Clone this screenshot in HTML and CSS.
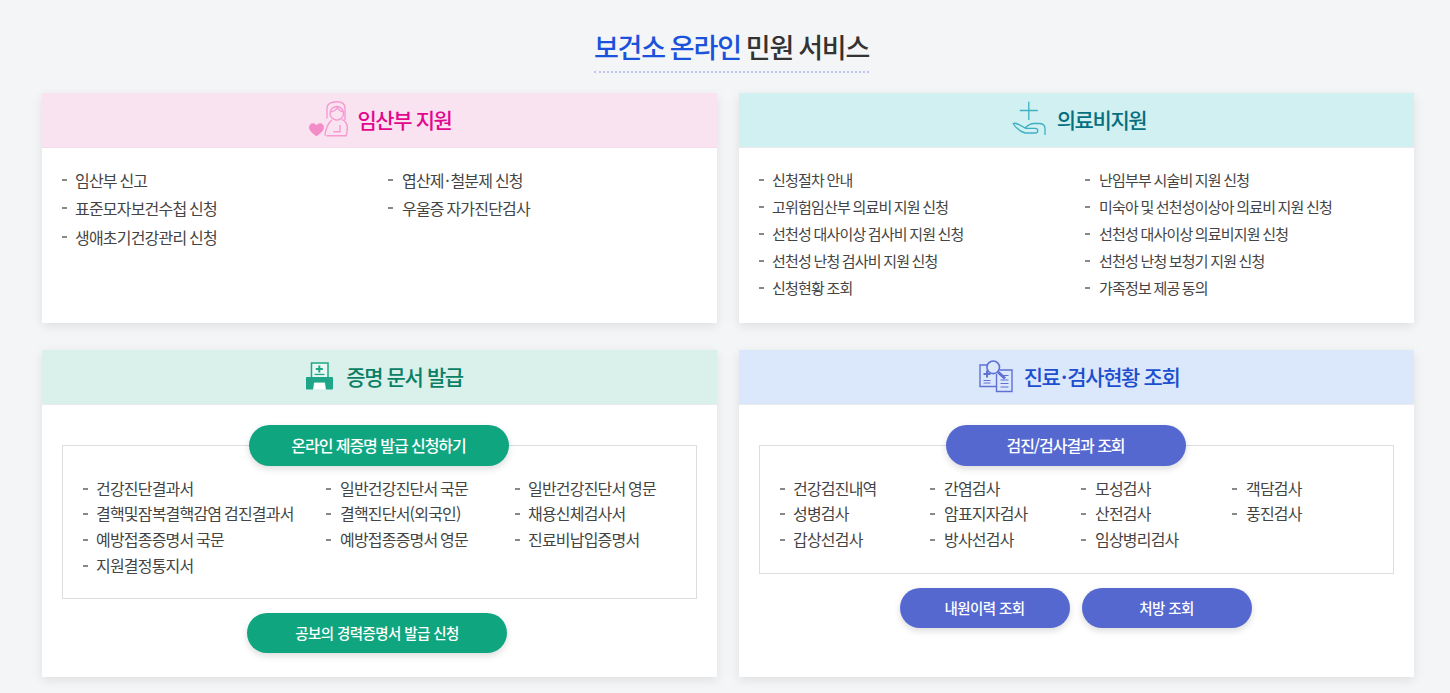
FILE: index.html
```html
<!DOCTYPE html>
<html lang="ko">
<head>
<meta charset="utf-8">
<title>보건소 온라인 민원 서비스</title>
<link rel="stylesheet" href="styles.css">
</head>
<body>
<main class="page">
  <div class="title-wrap">
    <h1 class="title"><span class="title-accent">보건소 온라인</span> 민원 서비스</h1>
  </div>
  <div class="cards">
    <section class="card card-top">
      <header class="card-head head-pink">
        <svg class="ico" width="41" height="40" viewBox="0 0 41 40" fill="none" stroke="#f59ad0" stroke-width="1.400">
          <path d="M2 27.500c0-2.500 1.800-4.200 3.800-4.200 1.500 0 3 .8 3.700 2.200.7-1.400 2.200-2.200 3.700-2.200 2 0 3.800 1.700 3.800 4.200 0 3.500-4.500 6.500-7.500 8.800-3-2.300-7.500-5.300-7.500-8.800z" fill="#f48cc8" stroke="none"/>
          <path d="M20 18.500V8c0-4 4-6.300 9.500-6.300S38 4 38 8v12"/>
          <circle cx="29.800" cy="13.300" r="6.800"/>
          <path d="M23.300 12c3-.3 5.500-1.800 7-4.500 1 2 3.200 3.700 6 4.500"/>
          <path d="M24.700 20C20.500 24 18.500 29.500 18 35.700M34.700 19.300c3.800 1.500 5.600 4.500 5.600 8.200 0 3-.3 5.500-1.300 8.200H19.500M26.300 31.700H33V25"/>
        </svg>
        <h2 class="card-title t-pink">임산부 지원</h2>
      </header>
      <ul class="list list-a">
        <li>임산부 신고</li>
        <li>엽산제<span class="dot">·</span>철분제 신청</li>
        <li>표준모자보건수첩 신청</li>
        <li>우울증 자가진단검사</li>
        <li>생애초기건강관리 신청</li>
      </ul>
    </section>
    <section class="card card-top">
      <header class="card-head head-teal">
        <svg class="ico" width="41" height="40" viewBox="0 0 41 40" fill="none" stroke="#3fb0c4" stroke-width="1.300">
          <path d="M21.800 1.700V20M12.800 10.500h18"/>
          <path d="M6 23.500c3-1 6.300 1 12 4.500 3-3 6-4.500 9-4.500h5c4 0 6 2 6 5V35M6 23.500c3 4.500 6.500 8 12 9.500H28c1.800 0 2.800-1 2.800-2.200 0-1.800-1-2.400-2.800-2.400h-9.800"/>
        </svg>
        <h2 class="card-title t-teal">의료비지원</h2>
      </header>
      <ul class="list list-b">
        <li>신청절차 안내</li>
        <li>난임부부 시술비 지원 신청</li>
        <li>고위험임산부 의료비 지원 신청</li>
        <li>미숙아 및 선천성이상아 의료비 지원 신청</li>
        <li>선천성 대사이상 검사비 지원 신청</li>
        <li>선천성 대사이상 의료비지원 신청</li>
        <li>선천성 난청 검사비 지원 신청</li>
        <li>선천성 난청 보청기 지원 신청</li>
        <li>신청현황 조회</li>
        <li>가족정보 제공 동의</li>
      </ul>
    </section>
    <section class="card card-bottom">
      <header class="card-head head-green">
        <svg class="ico" width="41" height="40" viewBox="0 0 41 40">
          <path d="M15.500 6h16.500v15H15.500z" fill="#eaf8f4" stroke="#1fa688" stroke-width="1.500"/>
          <path d="M22.300 8.500h2v2.500h2.500v2h-2.500v2.500h-2V13h-2.500v-2h2.500z" fill="#1fa688"/>
          <path d="M18.500 16.800h10v1.300h-10z" fill="#1fa688"/>
          <path d="M11 20h25c.6 0 1 .4 1 1v10.500c0 .6-.4 1-1 1h-6l-1-7H18l-1 7h-6c-.6 0-1-.4-1-1V21c0-.6.4-1 1-1z" fill="#1fa688"/>
          <path d="M18.700 26.200h9.600l1 6H17.700z" fill="#fff"/>
        </svg>
        <h2 class="card-title t-green">증명 문서 발급</h2>
      </header>
      <div class="card-body">
        <a class="pill pill-green pill-wide pill-over">온라인 제증명 발급 신청하기</a>
        <ul class="list list-c">
          <li>건강진단결과서</li>
          <li>일반건강진단서 국문</li>
          <li>일반건강진단서 영문</li>
          <li>결핵및잠복결핵감염 검진결과서</li>
          <li>결핵진단서(외국인)</li>
          <li>채용신체검사서</li>
          <li>예방접종증명서 국문</li>
          <li>예방접종증명서 영문</li>
          <li>진료비납입증명서</li>
          <li>지원결정통지서</li>
        </ul>
        <div class="pill-row pill-row-green">
          <a class="pill pill-green pill-wide">공보의 경력증명서 발급 신청</a>
        </div>
      </div>
    </section>
    <section class="card card-bottom">
      <header class="card-head head-blue">
        <svg class="ico" width="41" height="40" viewBox="0 0 41 40" fill="none" stroke="#5f71d4" stroke-width="1.400">
          <path d="M14 8H6v21.500H22.500V17"/>
          <path d="M25.500 13H38v21.500H22.500v-5"/>
          <circle cx="19.200" cy="10.300" r="6.300" stroke-width="1.600"/>
          <path d="M24 15l7 6.500" stroke-width="3"/>
          <path d="M12 13.500h2V16h2.500v2H14v2.500h-2V18H9.500v-2H12z" fill="#5f71d4" stroke="none"/>
          <path d="M9.500 23.500h7M9.500 26h7M26.500 18.500h8M26.500 23h8M26.500 26.500h8M26.500 30h8" stroke-width="1.100"/>
        </svg>
        <h2 class="card-title t-blue">진료<span class="dot">·</span>검사현황 조회</h2>
      </header>
      <div class="card-body">
        <a class="pill pill-blue pill-mid pill-over">검진/검사결과 조회</a>
        <ul class="list list-d">
          <li>건강검진내역</li>
          <li>간염검사</li>
          <li>모성검사</li>
          <li>객담검사</li>
          <li>성병검사</li>
          <li>암표지자검사</li>
          <li>산전검사</li>
          <li>풍진검사</li>
          <li>갑상선검사</li>
          <li>방사선검사</li>
          <li>임상병리검사</li>
        </ul>
        <div class="pill-row pill-row-blue">
          <a class="pill pill-blue pill-small">내원이력 조회</a>
          <a class="pill pill-blue pill-small">처방 조회</a>
        </div>
      </div>
    </section>
  </div>
</main>
</body>
</html>
```
FILE: styles.css
```css
* { box-sizing: border-box; }
html, body { margin: 0; padding: 0; }
body {
  background: #f3f5f7;
  font-family: "Noto Sans CJK KR", "Noto Sans", sans-serif;
  color: #444;
  overflow: hidden;
}
.page { height: 693px; padding: 27px 36px 0 42px; }
.title-wrap { display: flex; justify-content: center; height: 66px; padding-left: 7px; }
.title {
  margin: 0;
  height: 46px;
  font-size: 27px;
  font-weight: 500;
  line-height: 40px;
  letter-spacing: -1.2px;
  word-spacing: -1.3px;
  color: #333;
  border-bottom: 2px dotted #bcc4ef;
}
.title-accent { color: #1b52dc; }
.cards {
  display: grid;
  grid-template-columns: 675px 675px;
  grid-template-rows: 230px 327px;
  column-gap: 22px;
  row-gap: 27px;
}
.card { background: #fff; box-shadow: 0 3px 10px rgba(0, 0, 0, .09); }
.card-head {
  height: 55px;
  display: flex;
  align-items: center;
  justify-content: center;
  gap: 9px;
  border-bottom: 1px solid #e9e9ee;
}
.head-pink { background: #f9e3f1; border-bottom-color: #f5dcec; }
.head-teal { background: #d0f0f1; }
.head-green { background: #d9f1ea; }
.head-blue { background: #dbe7fa; }
.ico { display: block; flex: none; }
.card-title {
  margin: 0;
  padding-bottom: 2px;
  font-size: 21px;
  font-weight: 500;
  line-height: 30px;
  letter-spacing: -1.4px;
}
.t-pink { color: #e3078e; }
.t-teal { color: #076f80; }
.t-green { color: #0b7f66; }
.t-blue { color: #1b4ed0; }
.dot { margin: 0 1.500px; }
.list {
  list-style: none;
  margin: 0;
  padding: 0;
  display: grid;
  font-size: 16px;
  letter-spacing: -0.8px;
  word-spacing: -1px;
  color: #444;
}
.list li { position: relative; padding-left: 13px; white-space: nowrap; }
.list li::before {
  content: "";
  position: absolute;
  left: 0;
  top: calc(50% - 1px);
  width: 5px;
  height: 2px;
  background: #888;
}
.list-a li:nth-child(even)::before,
.list-b li:nth-child(even)::before,
.list-c li:nth-child(3n+2)::before,
.list-d li:not(:nth-child(4n+1))::before { left: -1px; }
.list-a {
  padding: 17.600px 0 0 20px;
  grid-template-columns: 327px 1fr;
  grid-auto-rows: 28.500px;
  line-height: 28.500px;
}
.list-b {
  padding: 18px 0 0 20px;
  grid-template-columns: 327px 1fr;
  grid-auto-rows: 27px;
  line-height: 27px;
  font-size: 15px;
}
.card-body { position: relative; padding: 40px 20px 0; }
.list-c, .list-d {
  border: 1px solid #ddd;
  grid-auto-rows: 25.700px;
  line-height: 25.700px;
}
.list-c {
  padding: 29.700px 0 19.300px 20px;
  grid-template-columns: 244px 188px 1fr;
}
.list-d {
  padding: 29.700px 0 20.300px 20px;
  grid-template-columns: repeat(4, 151px);
}
.pill {
  display: flex;
  align-items: center;
  justify-content: center;
  height: 40px;
  border-radius: 20px;
  color: #fff;
  font-size: 14.500px;
  font-weight: 500;
  letter-spacing: -0.6px;
  box-shadow: 0 3px 7px rgba(0, 0, 0, .14);
}
.pill-green { background: #0fa67f; }
.pill-blue { background: #5568cf; }
.pill-wide { width: 260px; }
.pill-mid { width: 240px; }
.pill-small { width: 170px; padding-bottom: 1px; }
.pill-over {
  position: absolute;
  top: 20px;
  left: 50%;
  height: 41px;
  border-radius: 21px;
  margin-left: -131px;
  padding-bottom: 2px;
  font-size: 16px;
  letter-spacing: -1.050px;
}
.pill-row { display: flex; justify-content: center; }
.pill-row-green { margin-top: 14px; padding-right: 5px; }
.pill-row-blue { margin-top: 14px; gap: 12px; padding-right: 2px; }
```
